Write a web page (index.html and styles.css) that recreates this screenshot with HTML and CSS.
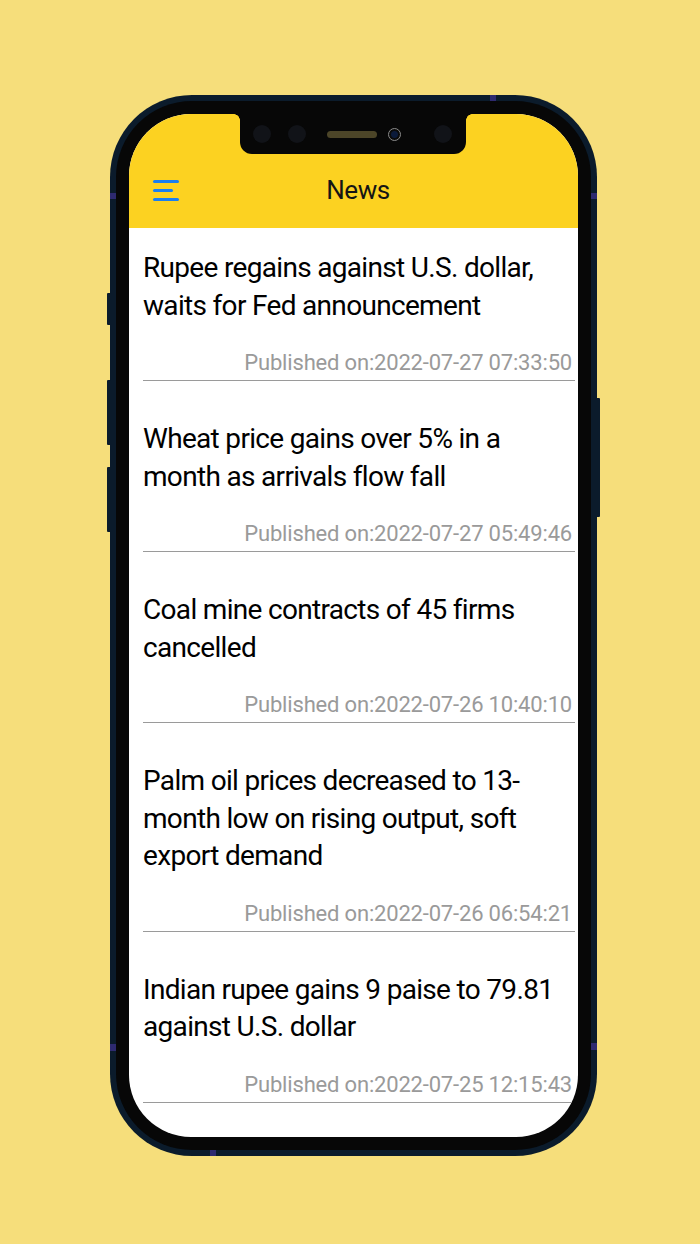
FILE: index.html
```html
<!DOCTYPE html>
<html lang="en">
<head>
<meta charset="utf-8">
<title>News</title>
<link rel="stylesheet" href="styles.css">
</head>
<body>
<div class="phone">
  <span class="btn btn-l1"></span>
  <span class="btn btn-l2"></span>
  <span class="btn btn-l3"></span>
  <span class="btn btn-r1"></span>
  <span class="mark mark-top"></span>
  <span class="mark mark-bottom"></span>
  <span class="mark mark-l1"></span>
  <span class="mark mark-l2"></span>
  <span class="mark mark-r1"></span>
  <span class="mark mark-r2"></span>
  <div class="bezel">
    <div class="screen">
      <div class="notch">
        <span class="dot"></span>
        <span class="dot"></span>
        <span class="speaker"></span>
        <span class="camera"></span>
        <span class="dot"></span>
      </div>
      <header class="appbar">
        <div class="menu">
          <span class="bar"></span>
          <span class="bar short"></span>
          <span class="bar"></span>
        </div>
        <h1 class="title">News</h1>
        <div></div>
      </header>
      <ul class="list">
        <li class="item">
          <p class="headline">Rupee regains against U.S. dollar, waits for Fed announcement</p>
          <p class="date">Published on:2022-07-27 07:33:50</p>
        </li>
        <li class="item">
          <p class="headline">Wheat price gains over 5% in a month as arrivals flow fall</p>
          <p class="date">Published on:2022-07-27 05:49:46</p>
        </li>
        <li class="item">
          <p class="headline">Coal mine contracts of 45 firms cancelled</p>
          <p class="date">Published on:2022-07-26 10:40:10</p>
        </li>
        <li class="item">
          <p class="headline">Palm oil prices decreased to 13-month low on rising output, soft export demand</p>
          <p class="date">Published on:2022-07-26 06:54:21</p>
        </li>
        <li class="item">
          <p class="headline">Indian rupee gains 9 paise to 79.81 against U.S. dollar</p>
          <p class="date">Published on:2022-07-25 12:15:43</p>
        </li>
      </ul>
    </div>
  </div>
</div>
</body>
</html>
```
FILE: styles.css
```css
* { box-sizing: border-box; }
html, body { margin: 0; padding: 0; }
body {
  background: #f6de7b;
  width: 700px;
  height: 1244px;
  overflow: hidden;
  font-family: Roboto, "Liberation Sans", sans-serif;
}
.phone {
  position: relative;
  margin: 95px 0 0 110px;
  width: 487px;
  height: 1061px;
  background: #0b1b2b;
  border-radius: 82px;
  padding: 6px;
}
.bezel {
  height: 100%;
  background: #070707;
  border-radius: 76px;
  padding: 13px;
}
.screen {
  position: relative;
  height: 100%;
  background: #fff;
  border-radius: 62px;
  overflow: hidden;
}
.btn {
  position: absolute;
  background: #0b1b2b;
  width: 4px;
  border-radius: 1px;
}
.btn-l1 { left: -3px; top: 198px; height: 32px; }
.btn-l2 { left: -3px; top: 285px; height: 65px; }
.btn-l3 { left: -3px; top: 372px; height: 65px; }
.btn-r1 { right: -3px; top: 303px; height: 119px; }
.mark { position: absolute; background: #2e2a70; }
.mark-top { top: 0; left: 380px; width: 6px; height: 6px; }
.mark-bottom { bottom: 0; left: 100px; width: 6px; height: 6px; }
.mark-l1 { left: 0; top: 98px; width: 6px; height: 6px; }
.mark-l2 { left: 0; top: 949px; width: 6px; height: 7px; }
.mark-r1 { right: 0; top: 98px; width: 6px; height: 6px; }
.mark-r2 { right: 0; top: 948px; width: 6px; height: 7px; }

.notch {
  position: absolute;
  top: 0;
  left: 111px;
  width: 226px;
  height: 40px;
  background: #070707;
  border-radius: 0 0 12px 12px;
  z-index: 2;
  display: flex;
  align-items: center;
  padding-left: 13px;
}
.notch::before, .notch::after {
  content: "";
  position: absolute;
  top: 0;
  width: 6px;
  height: 6px;
}
.notch::before {
  left: -6px;
  background: radial-gradient(circle at 0 6px, transparent 5.5px, #070707 6px);
}
.notch::after {
  right: -6px;
  background: radial-gradient(circle at 6px 6px, transparent 5.5px, #070707 6px);
}
.dot {
  width: 18px;
  height: 18px;
  border-radius: 50%;
  background: #111318;
  flex: none;
}
.dot:nth-child(2) { margin-left: 17px; }
.speaker {
  margin-left: 21px;
  width: 50px;
  height: 7px;
  border-radius: 4px;
  background: #4c4528;
  flex: none;
}
.camera {
  margin-left: 11px;
  width: 13px;
  height: 13px;
  border-radius: 50%;
  border: 1.5px solid #8a8a8a;
  background: radial-gradient(circle, #0b1a3a 3px, #0a0a0a 4px);
  flex: none;
}
.dot:last-child { margin-left: 33px; }

.appbar {
  height: 114px;
  background: #fcd221;
  display: grid;
  grid-template-columns: 1fr auto 1fr;
  align-items: center;
  padding: 57px 24px 19px 24px;
}
.menu {
  display: flex;
  flex-direction: column;
  gap: 6px;
  width: 26px;
}
.bar {
  display: block;
  height: 3px;
  width: 26px;
  border-radius: 2px;
  background: #1a7ff0;
}
.bar.short { width: 20px; }
.title {
  margin: 0 0 0 9px;
  font-size: 26px;
  font-weight: 400;
  color: #151515;
  line-height: 38px;
  letter-spacing: -0.4px;
}

.list {
  list-style: none;
  margin: 0;
  padding: 0 3px 0 14px;
}
.item {
  padding-top: 39px;
  border-bottom: 1px solid #9a9a9a;
}
.item:first-child { padding-top: 21px; }
.headline {
  margin: 0;
  font-size: 28px;
  line-height: 37.5px;
  color: #000;
  letter-spacing: -0.68px;
}
.date {
  margin: 26px 0 0;
  padding: 0 3px 4px 0;
  text-align: right;
  font-size: 22px;
  line-height: 26px;
  color: #9a9a9a;
  letter-spacing: -0.18px;
}
```
